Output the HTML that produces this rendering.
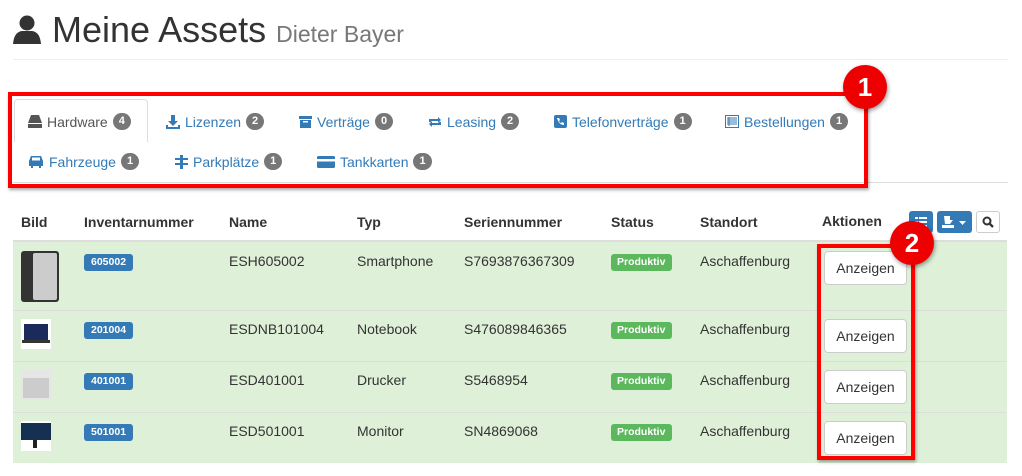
<!DOCTYPE html>
<html><head><meta charset="utf-8"><style>
*{box-sizing:border-box;margin:0;padding:0}
body{width:1022px;height:476px;background:#fff;font-family:"Liberation Sans",sans-serif;color:#333;position:relative;overflow:hidden;font-size:14px}
.a{position:absolute;white-space:nowrap}
.tab{position:absolute;color:#337ab7;font-size:14px;white-space:nowrap;display:flex;align-items:center}
.tab svg{margin-right:5px}
.bd{display:inline-block;background:#777;color:#fff;font-size:11px;font-weight:bold;border-radius:9px;padding:2px 6px;margin-left:5px;line-height:13px}
.th{position:absolute;top:214px;font-weight:bold;font-size:14px}
.row{position:absolute;left:13px;width:994px;background:#dff0d8;border-top:1px solid #ddd}
.lab{position:absolute;background:#337ab7;color:#fff;font-size:10.5px;font-weight:bold;border-radius:3px;padding:0 7px;height:17px;line-height:17px;left:84px}
.gr{position:absolute;background:#5cb85c;color:#fff;font-size:10.5px;font-weight:bold;border-radius:3px;padding:0 6px;height:17px;line-height:17px;left:611px;width:61px}
.btn{position:absolute;left:824px;width:83px;height:34px;background:#fff;border:1px solid #ccc;border-radius:4px;font-size:14px;text-align:center;line-height:32px}
.c{position:absolute;font-size:14px}
.circ{position:absolute;width:44px;height:44px;border-radius:50%;background:#e00;color:#fff;font-weight:bold;font-size:26px;text-align:center;line-height:44px;box-shadow:1px 2px 4px rgba(0,0,0,.4)}
</style></head><body>
<svg class="a" style="left:12px;top:14px" width="30" height="30" viewBox="0 0 30 30"><circle cx="15" cy="9" r="7.5" fill="#333"/><path d="M1 30 Q2 18 10 17 L20 17 Q28 18 29 30Z" fill="#333"/></svg>
<div class="a" style="left:52px;top:9px;font-size:36px;color:#333">Meine Assets <span style="font-size:23px;color:#777">Dieter Bayer</span></div>
<div class="a" style="left:13px;top:59px;width:995px;height:1px;background:#eee"></div>

<div class="a" style="left:13px;top:182px;width:995px;height:1px;background:#ddd"></div>
<div class="a" style="left:14px;top:99px;width:134px;border:1px solid #ddd;border-bottom:none;border-radius:4px 4px 0 0;background:#fff;height:43px"></div>
<div class="tab" style="left:28px;top:113px;color:#555"><svg width="14" height="13" viewBox="0 0 14 13"><path d="M3 0h8l3 8H0z" fill="#555"/><rect x="0" y="9" width="14" height="4" fill="#555"/></svg>Hardware<span class="bd">4</span></div>
<div class="tab" style="left:166px;top:113px"><svg width="14" height="14" viewBox="0 0 14 14"><path d="M5 0h4v6h3l-5 5-5-5h3z" fill="#337ab7"/><path d="M0 10h2v2h10v-2h2v4H0z" fill="#337ab7"/></svg>Lizenzen<span class="bd">2</span></div>
<div class="tab" style="left:299px;top:113px"><svg width="13" height="13" viewBox="0 0 13 13"><rect x="0" y="1" width="13" height="3" fill="#337ab7"/><rect x="1" y="5" width="11" height="8" fill="#337ab7"/><rect x="4" y="6" width="5" height="1.5" fill="#fff"/></svg>Verträge<span class="bd">0</span></div>
<div class="tab" style="left:428px;top:113px"><svg width="14" height="12" viewBox="0 0 14 12"><path d="M1 6V3h9V1l3 3-3 3V5H3v1zM13 6v3H4v2L1 8l3-3v2h7V6z" fill="#337ab7"/></svg>Leasing<span class="bd">2</span></div>
<div class="tab" style="left:554px;top:113px"><svg width="13" height="13" viewBox="0 0 13 13"><rect width="13" height="13" rx="2" fill="#337ab7"/><path d="M3 3h2l1 2-1 1q1 2 2 2l1-1 2 1v2q-5 0-7-7z" fill="#fff"/></svg>Telefonverträge<span class="bd">1</span></div>
<div class="tab" style="left:725px;top:113px"><svg width="14" height="13" viewBox="0 0 14 13"><rect x=".5" y=".5" width="13" height="12" fill="none" stroke="#337ab7"/><path d="M2 3h10M2 5h10M2 7h10M2 9h10M4 2v9" stroke="#337ab7"/></svg>Bestellungen<span class="bd">1</span></div>
<div class="tab" style="left:28px;top:153px"><svg width="16" height="13" viewBox="0 0 16 13"><path d="M3 1h10l2 5v5h-2v2h-2v-2H5v2H3v-2H1V6z" fill="#337ab7"/><rect x="4" y="2.5" width="8" height="3" fill="#fff"/></svg>Fahrzeuge<span class="bd">1</span></div>
<div class="tab" style="left:175px;top:153px"><svg width="13" height="14" viewBox="0 0 13 14"><rect x="5" y="0" width="3" height="14" fill="#337ab7"/><rect x="0" y="3" width="13" height="2" fill="#337ab7"/><rect x="0" y="8" width="13" height="2" fill="#337ab7"/></svg>Parkplätze<span class="bd">1</span></div>
<div class="tab" style="left:317px;top:153px"><svg width="18" height="12" viewBox="0 0 18 12"><rect width="18" height="12" rx="1.5" fill="#337ab7"/><rect y="3" width="18" height="2.5" fill="#fff"/></svg>Tankkarten<span class="bd">1</span></div>

<div class="a" style="left:8px;top:92px;width:860px;height:96px;border:4px solid #f00;box-shadow:1px 2px 3px rgba(0,0,0,.35)"></div>
<div class="circ" style="left:843px;top:65px">1</div>

<div class="th" style="left:21px">Bild</div>
<div class="th" style="left:84px">Inventarnummer</div>
<div class="th" style="left:229px">Name</div>
<div class="th" style="left:357px">Typ</div>
<div class="th" style="left:464px">Seriennummer</div>
<div class="th" style="left:611px">Status</div>
<div class="th" style="left:700px">Standort</div>
<div class="th" style="left:822px;top:213px">Aktionen</div>
<div class="a" style="left:909px;top:211px;width:24px;height:22px;background:#337ab7;border-radius:3px"><svg style="position:absolute;left:6px;top:5px" width="12" height="12" viewBox="0 0 12 12"><path d="M0 1h3v2H0zM4 1h8v2H4zM0 5h3v2H0zM4 5h8v2H4zM0 9h3v2H0zM4 9h8v2H4z" fill="#fff"/></svg></div>
<div class="a" style="left:937px;top:211px;width:35px;height:22px;background:#337ab7;border-radius:3px"><svg style="position:absolute;left:5px;top:5px" width="26" height="12" viewBox="0 0 26 12"><path d="M2 0h6v4h3l-3 4H3z M0 9h12v3H0z" fill="#fff"/><path d="M17 5h7l-3.5 4z" fill="#fff"/></svg></div>
<div class="a" style="left:976px;top:211px;width:24px;height:22px;border:1px solid #ccc;border-radius:3px"><svg style="position:absolute;left:5px;top:4px" width="12" height="12" viewBox="0 0 12 12"><circle cx="5" cy="5" r="3.5" fill="none" stroke="#333" stroke-width="2"/><path d="M7.5 7.5 11 11" stroke="#333" stroke-width="2.3"/></svg></div>
<div class="a" style="left:13px;top:240px;width:994px;height:2px;background:#ddd"></div>

<div class="row" style="top:242px;height:68px;border-top:none"></div>
<div class="row" style="top:310px;height:51px"></div>
<div class="row" style="top:361px;height:51px"></div>
<div class="row" style="top:412px;height:51px"></div>

<div class="a" style="left:21px;top:251px;width:38px;height:51px;background:#333;border-radius:3px"><div style="position:absolute;left:12px;top:2px;width:24px;height:47px;background:#ccc;border-radius:2px"></div></div>
<div class="a" style="left:21px;top:319px;width:30px;height:30px;background:#fff"><div style="position:absolute;left:3px;top:5px;width:24px;height:16px;background:#1a2a5a"></div><div style="position:absolute;left:1px;top:21px;width:28px;height:3px;background:#333"></div></div>
<div class="a" style="left:21px;top:370px;width:30px;height:30px;background:#e6e6e6"><div style="position:absolute;left:2px;top:8px;width:26px;height:20px;background:#ccc"></div></div>
<div class="a" style="left:21px;top:421px;width:30px;height:30px;background:#fff"><div style="position:absolute;left:0;top:2px;width:30px;height:17px;background:#153050"></div><div style="position:absolute;left:12px;top:19px;width:4px;height:8px;background:#222"></div></div>

<div class="lab" style="top:254px">605002</div>
<div class="lab" style="top:322px">201004</div>
<div class="lab" style="top:373px">401001</div>
<div class="lab" style="top:424px">501001</div>
<div class="c" style="left:229px;top:253px">ESH605002</div>
<div class="c" style="left:229px;top:321px">ESDNB101004</div>
<div class="c" style="left:229px;top:372px">ESD401001</div>
<div class="c" style="left:229px;top:423px">ESD501001</div>
<div class="c" style="left:357px;top:253px">Smartphone</div>
<div class="c" style="left:357px;top:321px">Notebook</div>
<div class="c" style="left:357px;top:372px">Drucker</div>
<div class="c" style="left:357px;top:423px">Monitor</div>
<div class="c" style="left:464px;top:253px">S7693876367309</div>
<div class="c" style="left:464px;top:321px">S476089846365</div>
<div class="c" style="left:464px;top:372px">S5468954</div>
<div class="c" style="left:464px;top:423px">SN4869068</div>
<div class="gr" style="top:254px">Produktiv</div>
<div class="gr" style="top:322px">Produktiv</div>
<div class="gr" style="top:373px">Produktiv</div>
<div class="gr" style="top:424px">Produktiv</div>
<div class="c" style="left:700px;top:253px">Aschaffenburg</div>
<div class="c" style="left:700px;top:321px">Aschaffenburg</div>
<div class="c" style="left:700px;top:372px">Aschaffenburg</div>
<div class="c" style="left:700px;top:423px">Aschaffenburg</div>
<div class="btn" style="top:251px">Anzeigen</div>
<div class="btn" style="top:319px">Anzeigen</div>
<div class="btn" style="top:370px">Anzeigen</div>
<div class="btn" style="top:421px">Anzeigen</div>

<div class="a" style="left:817px;top:244px;width:98px;height:216px;border:4px solid #f00;box-shadow:1px 2px 3px rgba(0,0,0,.35)"></div>
<div class="circ" style="left:890px;top:221px">2</div>
</body></html>
